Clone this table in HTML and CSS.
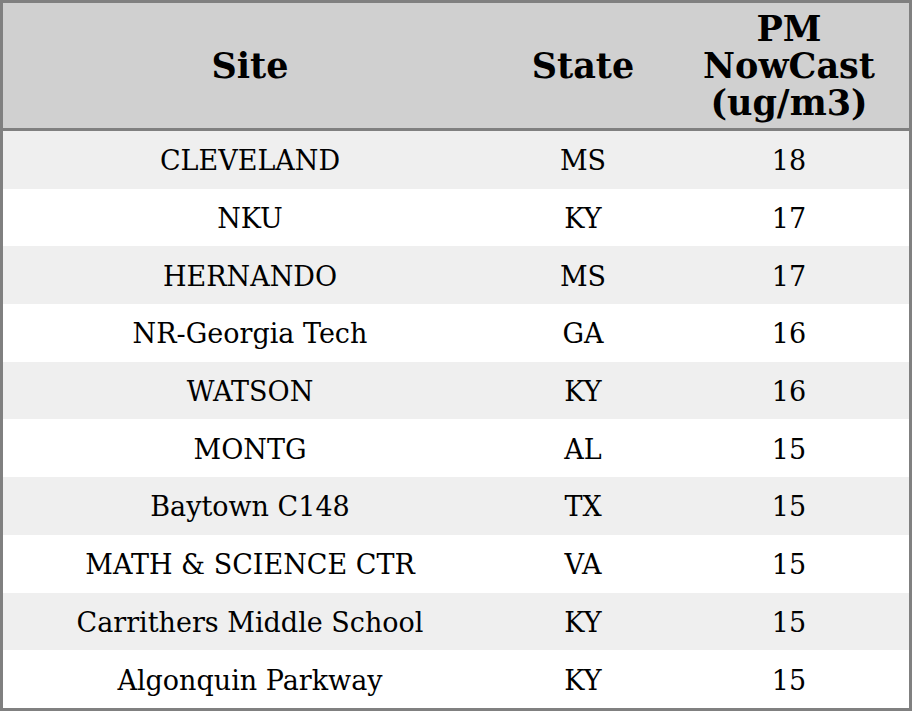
FILE: index.html
```html
<!DOCTYPE html>
<html>
<head>
<meta charset="utf-8">
<link rel="stylesheet" href="styles.css">
</head>
<body>
<table class="aq">
  <colgroup>
    <col class="c-site">
    <col class="c-state">
    <col class="c-pm">
  </colgroup>
  <thead>
    <tr><th>Site</th><th>State</th><th>PM<br>NowCast<br>(ug/m3)</th></tr>
  </thead>
  <tbody>
    <tr><td>CLEVELAND</td><td>MS</td><td>18</td></tr>
    <tr><td>NKU</td><td>KY</td><td>17</td></tr>
    <tr><td>HERNANDO</td><td>MS</td><td>17</td></tr>
    <tr><td>NR-Georgia Tech</td><td>GA</td><td>16</td></tr>
    <tr><td>WATSON</td><td>KY</td><td>16</td></tr>
    <tr><td>MONTG</td><td>AL</td><td>15</td></tr>
    <tr><td>Baytown C148</td><td>TX</td><td>15</td></tr>
    <tr><td>MATH &amp; SCIENCE CTR</td><td>VA</td><td>15</td></tr>
    <tr><td>Carrithers Middle School</td><td>KY</td><td>15</td></tr>
    <tr><td>Algonquin Parkway</td><td>KY</td><td>15</td></tr>
  </tbody>
</table>
</body>
</html>
```
FILE: styles.css
```css
html, body {
  margin: 0;
  padding: 0;
  background: #ffffff;
}
.aq {
  width: 912px;
  height: 711px;
  border-collapse: separate;
  border-spacing: 0;
  border: 3px solid #808080;
  box-sizing: border-box;
  font-family: "DejaVu Serif", serif;
  color: #000;
  table-layout: fixed;
}
.c-site { width: 494px; }
.c-state { width: 172px; }
.c-pm { width: 240px; }
.aq th {
  background: #d0d0d0;
  font-weight: bold;
  font-size: 35px;
  line-height: 37px;
  height: 125px;
  padding: 0;
  text-align: center;
  vertical-align: middle;
  border-bottom: 3px solid #808080;
}
.aq td {
  font-size: 27px;
  height: 55.7px;
  padding: 2px 0 0;
  text-align: center;
  vertical-align: middle;
}
.aq tbody tr:nth-child(odd) td {
  background: #efefef;
}
.aq tbody tr:nth-child(even) td {
  background: #ffffff;
}
```
